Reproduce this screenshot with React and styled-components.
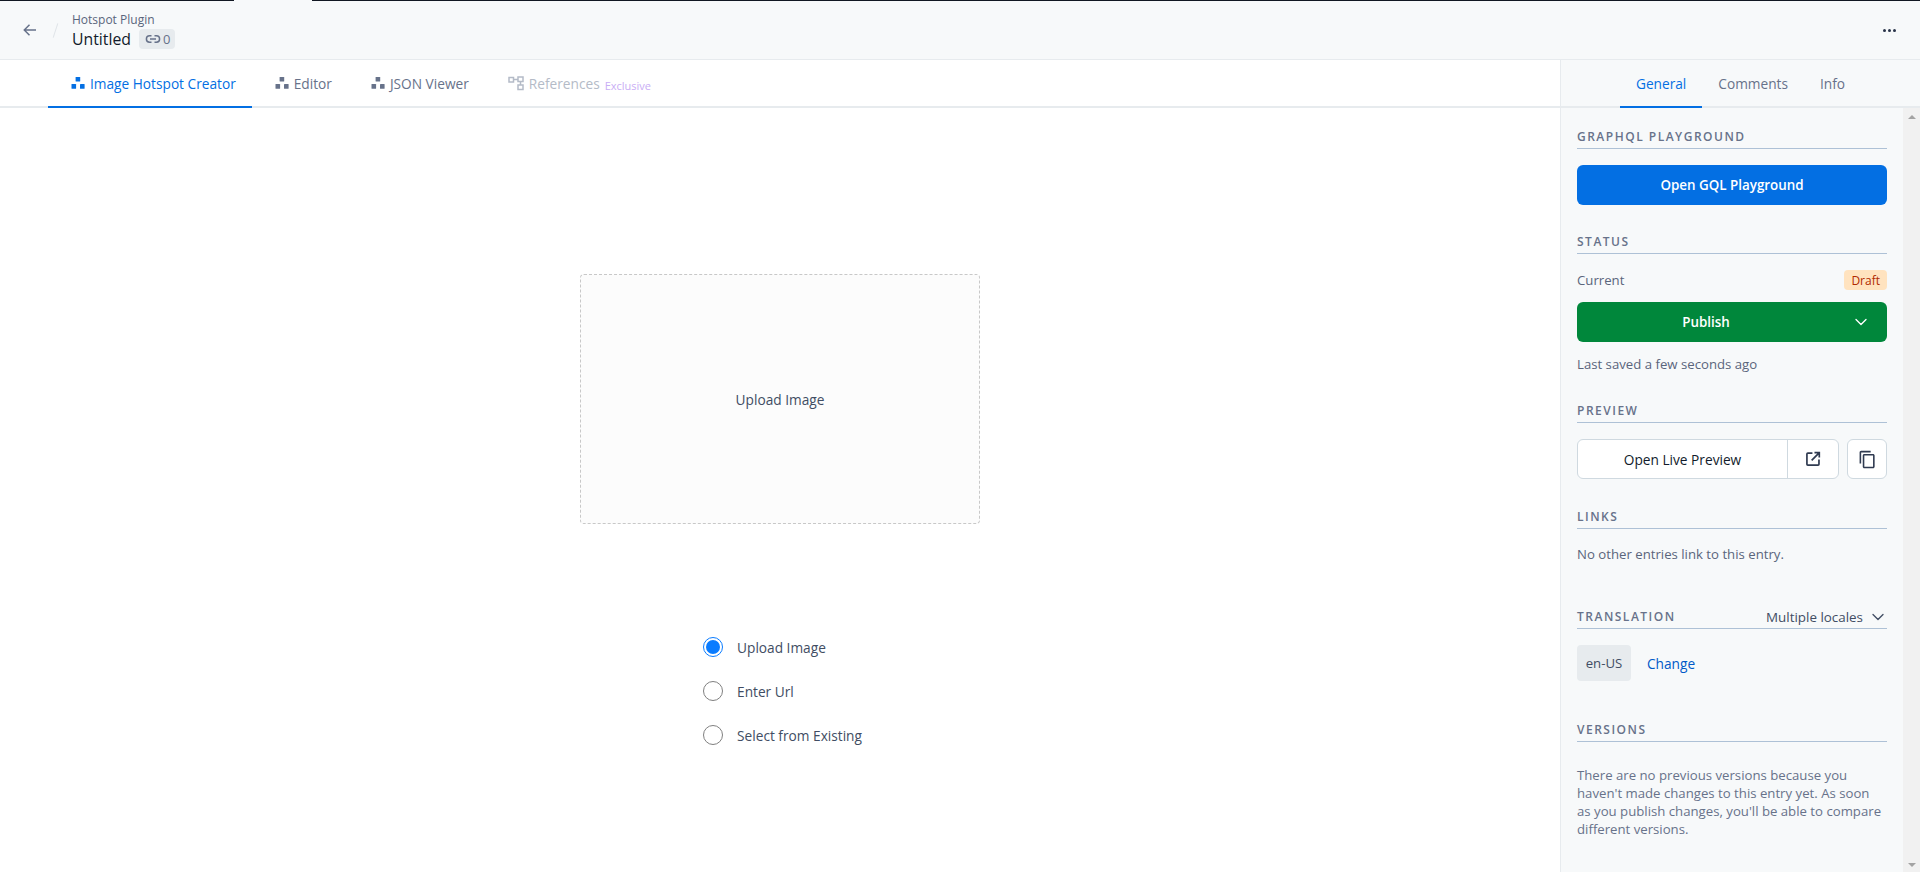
import React from 'react';
import styled, { createGlobalStyle } from 'styled-components';
import { ChevronDown } from 'lucide-react';
import { MdContentCopy } from 'react-icons/md';

const GlobalStyle = createGlobalStyle`
    html, body {
        margin: 0;
        height: 100%;
        overflow: hidden;
        background: #fff;
    }
    body {
        font-family: "Open Sans", "Noto Sans", sans-serif;
        font-size: 13.2px;
        color: #283248;
    }
    * {
        box-sizing: border-box;
    }
`;

const Page = styled.div`
    display: flex;
    flex-direction: column;
    height: 872px;
    overflow: hidden;
`;

const TopLine = styled.div`
    display: flex;
    flex: none;
    height: 1px;
    background: #111722;
`;

const TopLineGap = styled.div`
    width: 78px;
    margin-left: 234px;
    background: #f7f9fa;
`;

const Header = styled.header`
    flex: none;
    display: flex;
    align-items: center;
    height: 59px;
    padding: 0 24px 0 22px;
    background: #f7f9fa;
    border-bottom: 1px solid #e7ebee;
`;

const BackButton = styled.div`
    display: flex;
    color: #67728a;
`;

const Slash = styled.div`
    width: 1px;
    height: 15px;
    margin: 0 16px 0 17px;
    background: #e0e4e8;
    transform: rotate(18deg);
`;

const HeaderTitles = styled.div`
    display: flex;
    flex-direction: column;
    flex: 1;
`;

const Breadcrumb = styled.div`
    font-size: 12px;
    line-height: 16px;
    color: #5a657c;
`;

const TitleRow = styled.div`
    display: flex;
    align-items: center;
    gap: 8px;
    margin-top: 1px;
`;

const EntryTitle = styled.div`
    font-size: 15.8px;
    line-height: 20px;
    font-weight: 500;
    color: #111b2b;
`;

const LinkBadge = styled.div`
    display: flex;
    align-items: center;
    gap: 2px;
    height: 20px;
    padding: 0 5px 0 6px;
    border-radius: 4px;
    background: #e7ebee;
    font-size: 13px;
    color: #67728a;
`;

const MoreDots = styled.div`
    display: flex;
    gap: 2px;
`;

const Dot = styled.span`
    width: 3px;
    height: 3px;
    border-radius: 50%;
    background: #283248;
`;

const Body = styled.div`
    flex: 1;
    display: flex;
    min-height: 0;
`;

const MainColumn = styled.div`
    flex: 1;
    display: flex;
    flex-direction: column;
    min-width: 0;
`;

const TabBar = styled.nav`
    flex: none;
    display: flex;
    justify-content: ${props => props.centered ? 'center' : 'flex-start'};
    height: 48px;
    padding-left: ${props => props.centered ? '0' : '48px'};
    border-bottom: 2px solid #e7ebee;
    background: ${props => props.centered ? '#f7f9fa' : '#fff'};
`;

const Tab = styled.div`
    display: flex;
    align-items: center;
    height: 48px;
    padding: 0 16px 0 ${props => props.withIcon ? '23px' : '16px'};
    gap: 5px;
    font-size: 13.7px;
    font-weight: 500;
    color: ${props => props.active ? '#036fe3' : props.muted ? '#b4bbc7' : '#67728a'};
    border-bottom: 2px solid ${props => props.active ? '#036fe3' : 'transparent'};
`;

const ExclusiveTag = styled.span`
    margin-top: 4px;
    font-size: 11px;
    font-weight: 400;
    color: #c9aef5;
`;

const Canvas = styled.main`
    flex: 1;
    display: flex;
    flex-direction: column;
    align-items: center;
    padding-top: 166px;
`;

const UploadBox = styled.div`
    display: flex;
    align-items: center;
    justify-content: center;
    width: 400px;
    height: 250px;
    background: #fcfcfc;
    border: 1px dashed #c8c8c8;
    border-radius: 4px;
    font-size: 13.7px;
    font-weight: 500;
    color: #414d63;
`;

const RadioGroup = styled.div`
    display: flex;
    flex-direction: column;
    gap: 24px;
    margin-top: 113px;
    margin-left: 5px;
`;

const RadioRow = styled.label`
    display: flex;
    align-items: center;
    gap: 14px;
    height: 20px;
    font-size: 13.7px;
    font-weight: 500;
    color: #414d63;
`;

const RadioCircle = styled.span`
    display: flex;
    align-items: center;
    justify-content: center;
    width: 20px;
    height: 20px;
    border-radius: 50%;
    border: 1px solid ${props => props.checked ? '#0a7cff' : '#808080'};
    background: #fff;
    &::after {
        content: '';
        display: ${props => props.checked ? 'block' : 'none'};
        width: 14px;
        height: 14px;
        border-radius: 50%;
        background: #0a7cff;
    }
`;

const Sidebar = styled.aside`
    flex: none;
    display: flex;
    flex-direction: column;
    width: 360px;
    border-left: 1px solid #e7ebee;
    background: #f7f9fa;
`;

const SidebarScroll = styled.div`
    flex: 1;
    display: flex;
    min-height: 0;
`;

const SidebarContent = styled.div`
    flex: 1;
    display: flex;
    flex-direction: column;
    padding: 21px 16px 0;
`;

const FakeScrollbar = styled.div`
    flex: none;
    display: flex;
    flex-direction: column;
    justify-content: space-between;
    align-items: center;
    width: 17px;
    padding: 7px 0 5px;
    background: #f1f1f1;
`;

const ScrollArrow = styled.span`
    width: 0;
    height: 0;
    border-left: 4px solid transparent;
    border-right: 4px solid transparent;
    border-${props => props.down ? 'top' : 'bottom'}: 4px solid #a3a3a3;
`;

const SectionHeading = styled.div`
    display: flex;
    align-items: center;
    justify-content: space-between;
    height: 20px;
    margin-top: ${props => props.gap || 0}px;
    border-bottom: 1px solid #aec1d6;
    padding-bottom: 4px;
    font-size: 12px;
    font-weight: 600;
    letter-spacing: 1.5px;
    text-transform: uppercase;
    color: #67728a;
`;

const SectionAction = styled.span`
    display: flex;
    align-items: center;
    gap: 5px;
    margin-right: -1px;
    font-size: 13.4px;
    font-weight: 400;
    letter-spacing: 0;
    text-transform: none;
    color: #414d63;
`;

const FilledButton = styled.div`
    display: flex;
    align-items: center;
    justify-content: center;
    height: 40px;
    margin-top: ${props => props.gap || 16}px;
    border-radius: 6px;
    background: ${props => props.color};
    font-size: 13.4px;
    font-weight: 600;
    color: #fff;
`;

const ButtonLabel = styled.span`
    flex: 1;
    text-align: center;
`;

const ButtonChevron = styled.span`
    flex: none;
    display: flex;
    justify-content: center;
    width: 52px;
`;

const StatusRow = styled.div`
    display: flex;
    align-items: center;
    justify-content: space-between;
    margin-top: 16px;
    height: 20px;
    color: #5a657c;
`;

const DraftBadge = styled.span`
    display: flex;
    align-items: center;
    height: 20px;
    padding: 0 7px;
    border-radius: 4px;
    background: #ffe3bf;
    font-size: 12px;
    font-weight: 500;
    color: #b02a00;
`;

const Note = styled.div`
    margin-top: ${props => props.gap || 0}px;
    line-height: 20px;
    color: #5a657c;
`;

const PreviewRow = styled.div`
    display: flex;
    gap: 8px;
    margin-top: 16px;
`;

const ButtonGroup = styled.div`
    flex: 1;
    display: flex;
    height: 40px;
    background: #fff;
    border: 1px solid #cfd9e0;
    border-radius: 6px;
`;

const GroupLabel = styled.div`
    flex: 1;
    display: flex;
    align-items: center;
    justify-content: center;
    font-size: 13.7px;
    font-weight: 500;
    color: #111b2b;
`;

const GroupIcon = styled.div`
    display: flex;
    align-items: center;
    justify-content: center;
    width: 51px;
    border-left: 1px solid #cfd9e0;
    color: #2f3a50;
`;

const IconButton = styled.div`
    display: flex;
    align-items: center;
    justify-content: center;
    width: 40px;
    height: 40px;
    background: #fff;
    border: 1px solid #cfd9e0;
    border-radius: 6px;
    color: #2f3a50;
`;

const LocaleRow = styled.div`
    display: flex;
    align-items: center;
    gap: 16px;
    margin-top: 16px;
`;

const LocalePill = styled.div`
    display: flex;
    align-items: center;
    justify-content: center;
    width: 54px;
    height: 36px;
    border-radius: 4px;
    background: #e7ebee;
    color: #414d63;
`;

const ChangeLink = styled.a`
    font-size: 13.7px;
    font-weight: 500;
    color: #0059c8;
`;

const VersionsNote = styled.div`
    margin-top: 24px;
    padding-right: 2px;
    line-height: 18px;
    color: #67728a;
`;

function ClusterIcon() {
    return (
        <svg width="14" height="14" viewBox="0 0 14 14" fill="currentColor">
            <rect x="4.6" y="1" width="4.6" height="4.6" rx="0.6" />
            <rect x="0.5" y="8" width="4.6" height="4.8" rx="0.6" />
            <rect x="9" y="8" width="4.6" height="4.8" rx="0.6" />
        </svg>
    );
}

function ReferencesIcon() {
    return (
        <svg width="16" height="16" viewBox="0 0 16 16" fill="none" stroke="currentColor" strokeWidth="1.5">
            <rect x="1" y="2.5" width="4.5" height="4.5" />
            <rect x="10" y="2" width="5" height="4.5" />
            <rect x="10" y="10" width="5" height="4.5" />
            <path d="M5.5 4.4H10M12.5 6.5V10" />
        </svg>
    );
}

function BackArrow() {
    return (
        <svg width="16" height="16" viewBox="0 0 16 16" fill="none" stroke="currentColor" strokeWidth="1.5">
            <path d="M14 8H2.5M7.5 2.8L2.3 8l5.2 5.2" />
        </svg>
    );
}

function LinkIcon() {
    return (
        <svg width="16" height="16" viewBox="0 0 16 16" fill="none" stroke="currentColor" strokeWidth="1.5">
            <path d="M6.5 4.8H4.6a3.2 3.2 0 0 0 0 6.4h1.9M9.5 4.8h1.9a3.2 3.2 0 0 1 0 6.4H9.5M5 8h6" />
        </svg>
    );
}

function OpenInNewIcon() {
    return (
        <svg width="18" height="18" viewBox="0 0 16 16" fill="none" stroke="currentColor" strokeWidth="1.5">
            <path d="M7.5 2.7H3.4a.8.8 0 0 0-.8.8v9.1c0 .4.4.8.8.8h9.1c.4 0 .8-.4.8-.8V8.5" />
            <path d="M6.8 9.2l6.4-6.4M9.3 2.4h4.3v4.3" />
        </svg>
    );
}

function Section({ title, gap, action, children }) {
    return (
        <>
            <SectionHeading gap={gap}>
                {title}
                {action}
            </SectionHeading>
            {children}
        </>
    );
}

export default function App() {
    return (
        <>
            <GlobalStyle />
            <Page>
                <TopLine>
                    <TopLineGap />
                </TopLine>
                <Header>
                    <BackButton><BackArrow /></BackButton>
                    <Slash />
                    <HeaderTitles>
                        <Breadcrumb>Hotspot Plugin</Breadcrumb>
                        <TitleRow>
                            <EntryTitle>Untitled</EntryTitle>
                            <LinkBadge><LinkIcon />0</LinkBadge>
                        </TitleRow>
                    </HeaderTitles>
                    <MoreDots><Dot /><Dot /><Dot /></MoreDots>
                </Header>
                <Body>
                    <MainColumn>
                        <TabBar>
                            <Tab withIcon active><ClusterIcon />Image Hotspot Creator</Tab>
                            <Tab withIcon><ClusterIcon />Editor</Tab>
                            <Tab withIcon><ClusterIcon />JSON Viewer</Tab>
                            <Tab withIcon muted>
                                <ReferencesIcon />References
                                <ExclusiveTag>Exclusive</ExclusiveTag>
                            </Tab>
                        </TabBar>
                        <Canvas>
                            <UploadBox>Upload Image</UploadBox>
                            <RadioGroup>
                                <RadioRow><RadioCircle checked />Upload Image</RadioRow>
                                <RadioRow><RadioCircle />Enter Url</RadioRow>
                                <RadioRow><RadioCircle />Select from Existing</RadioRow>
                            </RadioGroup>
                        </Canvas>
                    </MainColumn>
                    <Sidebar>
                        <TabBar centered>
                            <Tab active>General</Tab>
                            <Tab>Comments</Tab>
                            <Tab>Info</Tab>
                        </TabBar>
                        <SidebarScroll>
                            <SidebarContent>
                                <Section title="GraphQL Playground">
                                    <FilledButton color="#036fe3">Open GQL Playground</FilledButton>
                                </Section>
                                <Section title="Status" gap={29}>
                                    <StatusRow>Current<DraftBadge>Draft</DraftBadge></StatusRow>
                                    <FilledButton color="#00873b" gap={12}>
                                        <ButtonLabel>Publish</ButtonLabel>
                                        <ButtonChevron><ChevronDown size={20} strokeWidth={1.6} /></ButtonChevron>
                                    </FilledButton>
                                    <Note gap={12}>Last saved a few seconds ago</Note>
                                </Section>
                                <Section title="Preview" gap={29}>
                                    <PreviewRow>
                                        <ButtonGroup>
                                            <GroupLabel>Open Live Preview</GroupLabel>
                                            <GroupIcon><OpenInNewIcon /></GroupIcon>
                                        </ButtonGroup>
                                        <IconButton><MdContentCopy size={19} /></IconButton>
                                    </PreviewRow>
                                </Section>
                                <Section title="Links" gap={30}>
                                    <Note gap={15}>No other entries link to this entry.</Note>
                                </Section>
                                <Section title="Translation" gap={45} action={<SectionAction>Multiple locales <ChevronDown size={20} strokeWidth={1.6} /></SectionAction>}>
                                    <LocaleRow>
                                        <LocalePill>en-US</LocalePill>
                                        <ChangeLink>Change</ChangeLink>
                                    </LocaleRow>
                                </Section>
                                <Section title="Versions" gap={41}>
                                    <VersionsNote>
                                        There are no previous versions because you haven't made changes to this entry yet. As soon as you publish changes, you'll be able to compare different versions.
                                    </VersionsNote>
                                </Section>
                            </SidebarContent>
                            <FakeScrollbar>
                                <ScrollArrow />
                                <ScrollArrow down />
                            </FakeScrollbar>
                        </SidebarScroll>
                    </Sidebar>
                </Body>
            </Page>
        </>
    );
}
